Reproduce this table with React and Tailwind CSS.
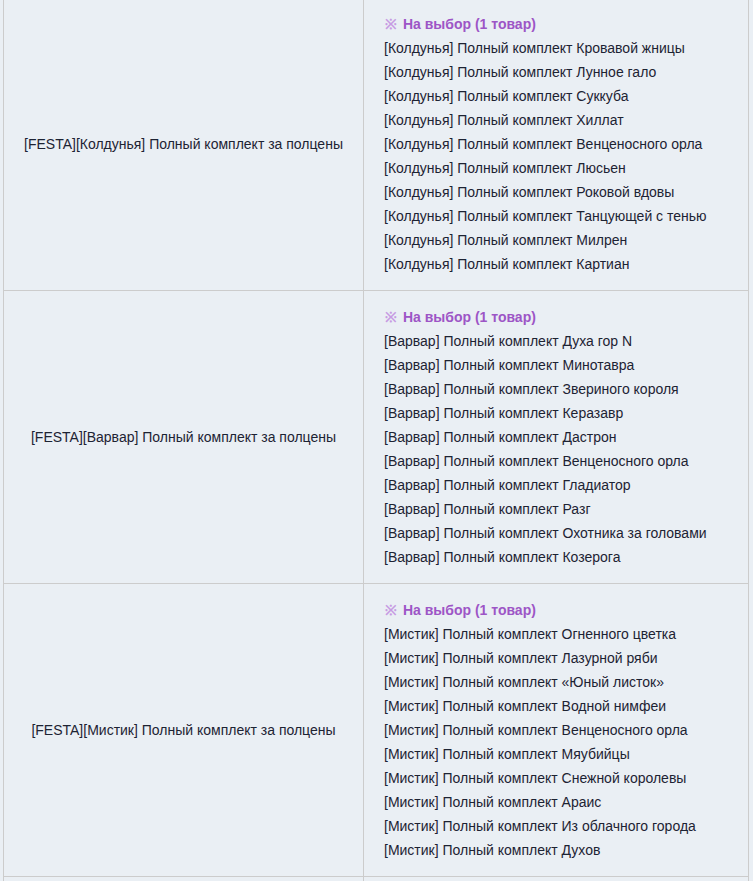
import React from "react";

const rows = [
  {
    title: "[FESTA][Колдунья] Полный комплект за полцены",
    cls: "Колдунья",
    items: [
      "Кровавой жницы",
      "Лунное гало",
      "Суккуба",
      "Хиллат",
      "Венценосного орла",
      "Люсьен",
      "Роковой вдовы",
      "Танцующей с тенью",
      "Милрен",
      "Картиан",
    ],
  },
  {
    title: "[FESTA][Варвар] Полный комплект за полцены",
    cls: "Варвар",
    items: [
      "Духа гор N",
      "Минотавра",
      "Звериного короля",
      "Керазавр",
      "Дастрон",
      "Венценосного орла",
      "Гладиатор",
      "Разг",
      "Охотника за головами",
      "Козерога",
    ],
  },
  {
    title: "[FESTA][Мистик] Полный комплект за полцены",
    cls: "Мистик",
    items: [
      "Огненного цветка",
      "Лазурной ряби",
      "«Юный листок»",
      "Водной нимфеи",
      "Венценосного орла",
      "Мяубийцы",
      "Снежной королевы",
      "Араис",
      "Из облачного города",
      "Духов",
    ],
  },
];

const Row = ({ row }) => (
  <div className="grid grid-cols-[360px_385px] border-b border-[#cccccc]">
    <div className="flex items-center justify-center border-r border-[#cccccc] px-3">
      {row.title}
    </div>
    <div className="py-[14px] pl-[20px] pr-2">
      <div className="font-bold text-[#9d55c6]">
        <span className="ml-px mr-[2px] text-[#c79be3]">※</span> На выбор (1 товар)
      </div>
      {row.items.map((item) => (
        <div key={item}>
          [{row.cls}] Полный комплект {item}
        </div>
      ))}
    </div>
  </div>
);

export default function App() {
  return (
    <div className="h-[881px] overflow-hidden bg-[#eaeff4] font-['Liberation_Sans',Arial,sans-serif] text-[14px] leading-[24px] text-[#1d2333]">
      <div className="-mt-[3px] ml-[3px] w-[746px] border-l border-r border-t border-[#cccccc]">
        {rows.map((row) => (
          <Row key={row.title} row={row} />
        ))}
        <div className="grid h-[40px] grid-cols-[360px_385px]">
          <div className="border-r border-[#cccccc]" />
          <div />
        </div>
      </div>
    </div>
  );
}
